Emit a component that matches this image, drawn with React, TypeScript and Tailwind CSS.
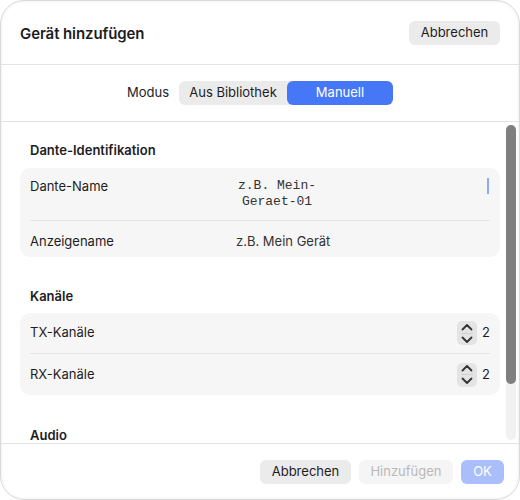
function Stepper({ value }: { value: number }) {
  return (
    <div className="flex items-center gap-[5px]">
      <div className="flex h-6 w-5 flex-col items-center justify-center rounded-[5px] bg-[#e4e4e4]">
        <svg width="12" height="8" viewBox="0 0 12 8" fill="none" className="mb-[1px]">
          <path d="M1.5 6.5 L6 2 L10.5 6.5" stroke="#333" strokeWidth="1.8" strokeLinecap="round" strokeLinejoin="round" />
        </svg>
        <div className="my-[1px] h-px w-3 bg-[#d0d0d0]" />
        <svg width="12" height="8" viewBox="0 0 12 8" fill="none" className="mt-[1px]">
          <path d="M1.5 1.5 L6 6 L10.5 1.5" stroke="#333" strokeWidth="1.8" strokeLinecap="round" strokeLinejoin="round" />
        </svg>
      </div>
      <span className="w-2 text-[13px] text-[#1d1d1f]">{value}</span>
    </div>
  );
}

export default function App() {
  return (
    <div className="h-[500px] w-[520px] bg-white font-['Inter','Helvetica_Neue',sans-serif] text-[#1d1d1f]">
      <div className="flex h-full flex-col overflow-hidden rounded-[24px] border border-[#dadada] bg-white shadow-[inset_0_0_3px_rgba(0,0,0,0.1)]">
        {/* Header */}
        <div className="flex h-[64px] shrink-0 items-center justify-between border-b border-[#e3e3e3] pl-[19px] pr-[19px]">
          <h1 className="pt-[3px] text-[15px] font-semibold tracking-[-0.1px]">Gerät hinzufügen</h1>
          <button className="mt-[1px] h-6 w-[91px] rounded-[6px] bg-[#ebebeb] text-[13px]">Abbrechen</button>
        </div>

        {/* Modus */}
        <div className="flex h-[57px] shrink-0 items-center justify-center gap-[10px] border-b border-[#e3e3e3]">
          <span className="text-[13px]">Modus</span>
          <div className="flex h-6 w-[214px] rounded-[6px] bg-[#ebebeb] text-[13px]">
            <div className="flex w-[108px] items-center justify-center">Aus Bibliothek</div>
            <div className="flex flex-1 items-center justify-center rounded-[6px] bg-[#4677f6] text-white">Manuell</div>
          </div>
        </div>

        {/* Scroll content */}
        <div className="relative flex-1 overflow-hidden">
          <div className="pl-[19px] pr-[19px] pt-5 text-[13px]">
            <h2 className="mb-[10px] pl-[10px] text-[13px] font-semibold leading-4">Dante-Identifikation</h2>
            <div className="rounded-[10px] bg-[#f6f6f6] px-[10px]">
              <div className="relative flex border-b border-[#e4e4e4] pb-[10px] pt-[10px] leading-4">
                <span className="w-[206px]">Dante-Name</span>
                <div className="w-[82px] text-center font-['Liberation_Mono',monospace] text-[13px] text-[#333]">
                  <div>z.B. Mein-</div>
                  <div>Geraet-01</div>
                </div>
                <div className="absolute right-[1px] top-[10px] h-4 w-[2px] bg-[#8fa8f7]" />
              </div>
              <div className="flex pb-2 pt-3 leading-4">
                <span className="w-[206px]">Anzeigename</span>
                <span className="text-[#333]">z.B. Mein Gerät</span>
              </div>
            </div>

            <h2 className="mb-[9px] mt-[31px] pl-[10px] text-[13px] font-semibold leading-4">Kanäle</h2>
            <div className="rounded-[10px] bg-[#f6f6f6] px-[10px]">
              <div className="flex h-[41px] items-center justify-between border-b border-[#e4e4e4]">
                <span>TX-Kanäle</span>
                <Stepper value={2} />
              </div>
              <div className="flex h-[41px] items-center justify-between">
                <span>RX-Kanäle</span>
                <Stepper value={2} />
              </div>
            </div>

            <h2 className="mt-8 pl-[10px] text-[13px] font-semibold leading-4">Audio</h2>
          </div>

          {/* Overlay scrollbar */}
          <div className="absolute bottom-[3px] right-[3px] top-[3px] w-[10px] rounded-full bg-[#f1f1f1]">
            <div className="h-[259px] w-full rounded-full bg-[#7f7f7f]" />
          </div>
        </div>

        {/* Footer */}
        <div className="flex h-[56px] shrink-0 items-center justify-end gap-2 border-t border-[#e3e3e3] pr-[15px]">
          <button className="h-6 w-[91px] rounded-[6px] bg-[#ebebeb] text-[13px]">Abbrechen</button>
          <button className="h-6 w-[94px] rounded-[6px] bg-[#f5f5f5] text-[13px] text-[#b9b9b9]">Hinzufügen</button>
          <button className="h-6 w-[43px] rounded-[6px] bg-[#aabefb] text-[13px] text-white">OK</button>
        </div>
      </div>
    </div>
  );
}
